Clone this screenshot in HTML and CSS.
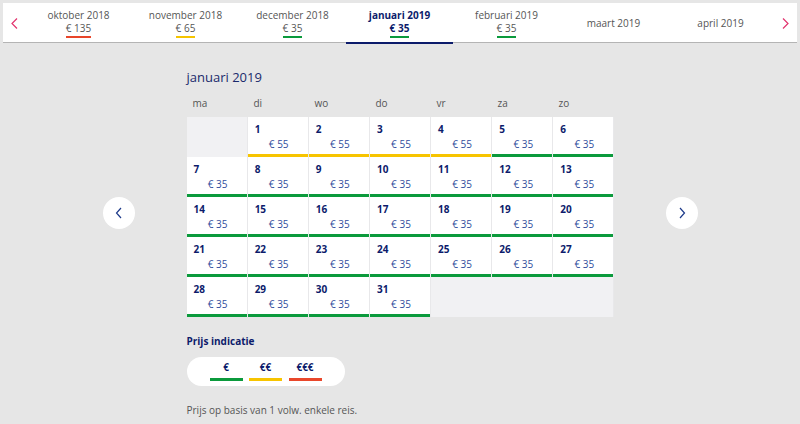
FILE: index.html
```html
<!DOCTYPE html>
<html lang="nl">
<head>
<meta charset="utf-8">
<title>Kalender</title>
<link rel="stylesheet" href="styles.css">
</head>
<body>
<div class="topbar">
  <button class="tab-arrow"><svg width="7" height="11" viewBox="0 0 7 11"><path d="M6 0.5 L1 5.5 L6 10.5" fill="none" stroke="#e2346e" stroke-width="1.2"/></svg></button>
  <div class="tabs">
    <div class="tab"><span class="m">oktober 2018</span><span class="p red">€ 135</span></div>
    <div class="tab"><span class="m">november 2018</span><span class="p yellow">€ 65</span></div>
    <div class="tab"><span class="m">december 2018</span><span class="p green">€ 35</span></div>
    <div class="tab active"><span class="m">januari 2019</span><span class="p green">€ 35</span></div>
    <div class="tab"><span class="m">februari 2019</span><span class="p green">€ 35</span></div>
    <div class="tab single"><span class="m">maart 2019</span></div>
    <div class="tab single"><span class="m">april 2019</span></div>
  </div>
  <button class="tab-arrow"><svg width="7" height="11" viewBox="0 0 7 11"><path d="M1 0.5 L6 5.5 L1 10.5" fill="none" stroke="#e2346e" stroke-width="1.2"/></svg></button>
</div>

<div class="main">
  <button class="nav"><svg width="8" height="12" viewBox="0 0 8 12"><path d="M6 1 L1.5 6 L6 11" fill="none" stroke="#1d3a8a" stroke-width="1.2"/></svg></button>
  <div class="cal">
    <h2 class="title">januari 2019</h2>
    <div class="dow"><span>ma</span><span>di</span><span>wo</span><span>do</span><span>vr</span><span>za</span><span>zo</span></div>
    <div class="grid">
      <div class="cell empty"></div>
      <div class="cell yellow"><b>1</b><span>€ 55</span></div>
      <div class="cell yellow"><b>2</b><span>€ 55</span></div>
      <div class="cell yellow"><b>3</b><span>€ 55</span></div>
      <div class="cell yellow"><b>4</b><span>€ 55</span></div>
      <div class="cell green"><b>5</b><span>€ 35</span></div>
      <div class="cell green"><b>6</b><span>€ 35</span></div>
      <div class="cell green"><b>7</b><span>€ 35</span></div>
      <div class="cell green"><b>8</b><span>€ 35</span></div>
      <div class="cell green"><b>9</b><span>€ 35</span></div>
      <div class="cell green"><b>10</b><span>€ 35</span></div>
      <div class="cell green"><b>11</b><span>€ 35</span></div>
      <div class="cell green"><b>12</b><span>€ 35</span></div>
      <div class="cell green"><b>13</b><span>€ 35</span></div>
      <div class="cell green"><b>14</b><span>€ 35</span></div>
      <div class="cell green"><b>15</b><span>€ 35</span></div>
      <div class="cell green"><b>16</b><span>€ 35</span></div>
      <div class="cell green"><b>17</b><span>€ 35</span></div>
      <div class="cell green"><b>18</b><span>€ 35</span></div>
      <div class="cell green"><b>19</b><span>€ 35</span></div>
      <div class="cell green"><b>20</b><span>€ 35</span></div>
      <div class="cell green"><b>21</b><span>€ 35</span></div>
      <div class="cell green"><b>22</b><span>€ 35</span></div>
      <div class="cell green"><b>23</b><span>€ 35</span></div>
      <div class="cell green"><b>24</b><span>€ 35</span></div>
      <div class="cell green"><b>25</b><span>€ 35</span></div>
      <div class="cell green"><b>26</b><span>€ 35</span></div>
      <div class="cell green"><b>27</b><span>€ 35</span></div>
      <div class="cell green"><b>28</b><span>€ 35</span></div>
      <div class="cell green"><b>29</b><span>€ 35</span></div>
      <div class="cell green"><b>30</b><span>€ 35</span></div>
      <div class="cell green"><b>31</b><span>€ 35</span></div>
      <div class="cell empty trail"></div>
    </div>
    <h3 class="legend-title">Prijs indicatie</h3>
    <div class="legend">
      <div class="lg green">€</div>
      <div class="lg yellow">€€</div>
      <div class="lg red">€€€</div>
    </div>
    <p class="note">Prijs op basis van 1 volw. enkele reis.</p>
  </div>
  <button class="nav"><svg width="8" height="12" viewBox="0 0 8 12"><path d="M2 1 L6.5 6 L2 11" fill="none" stroke="#1d3a8a" stroke-width="1.2"/></svg></button>
</div>
</body>
</html>
```

FILE: styles.css
```css
* { box-sizing: border-box; }
html, body { margin: 0; }
body {
  background: #e6e6e6;
  padding: 3px;
  font-family: "Open Sans", "Noto Sans", sans-serif;
  color: #555;
  height: 424px;
  overflow: hidden;
}
button { font: inherit; border: 0; padding: 0; background: none; cursor: pointer; }

.topbar {
  display: flex;
  height: 40px;
  background: #fff;
  border-bottom: 1px solid #b4b4b4;
}
.tab-arrow {
  width: 22px;
  display: flex;
  align-items: center;
  justify-content: center;
  padding-top: 1px;
}
.tab-arrow:last-child { width: 23px; }
.tabs { display: flex; }
.tab {
  width: 107px;
  display: flex;
  flex-direction: column;
  align-items: center;
  justify-content: flex-start;
  padding-top: 6px;
  font-size: 10px;
  line-height: 13px;
  color: #555;
  position: relative;
}
.tab.single { justify-content: center; padding-top: 2px; }
.tab .p {
  padding-bottom: 1px;
  border-bottom: 2px solid;
}
.tab .p.red { border-color: #e8452a; }
.tab .p.yellow { border-color: #f5c400; }
.tab .p.green { border-color: #0b9a3c; }
.tab.active { color: #0c1b6b; font-weight: 700; }
.tab.active::after {
  content: "";
  position: absolute;
  left: 0; right: 0; bottom: -2px;
  height: 2px;
  background: #0c1b6b;
}

.main {
  display: flex;
  justify-content: center;
  align-items: flex-start;
  gap: 52px;
}
.nav {
  width: 32px;
  height: 32px;
  border-radius: 50%;
  background: #fff;
  margin-top: 154px;
  display: flex;
  align-items: center;
  justify-content: center;
}
.cal { width: 427px; }
.title {
  margin: 25px 0 0;
  font-size: 13px;
  line-height: 18px;
  font-weight: 400;
  color: #1a2a6c;
}
.dow {
  display: grid;
  grid-template-columns: repeat(7, 1fr);
  margin-top: 10px;
  height: 21px;
  font-size: 10px;
  line-height: 14px;
  color: #555;
}
.dow span { padding-left: 6px; }
.grid {
  display: grid;
  grid-template-columns: repeat(7, 1fr);
  grid-auto-rows: 40px;
  column-gap: 1px;
  background: #e8e8ea;
}
.cell {
  background: #fff;
  display: flex;
  flex-direction: column;
  padding: 6px 7px 0;
  border-bottom: 3px solid transparent;
}
.cell b {
  font-size: 10px;
  line-height: 12px;
  color: #0c1b6b;
  font-weight: 700;
}
.cell span {
  margin-top: 3px;
  text-align: center;
  font-size: 10px;
  line-height: 13px;
  color: #2f4c9c;
  padding-left: 2px;
}
.cell.yellow { border-bottom-color: #f7c400; }
.cell.green { border-bottom-color: #0b9a3c; }
.cell.empty { background: #f1f1f3; border-bottom: 0; }
.cell.trail { grid-column: span 3; }

.legend-title {
  margin: 17px 0 0;
  font-size: 10px;
  line-height: 14px;
  font-weight: 700;
  color: #0c1b6b;
}
.legend {
  margin-top: 9px;
  width: 158px;
  height: 29px;
  background: #fff;
  border-radius: 15px;
  display: flex;
  gap: 6.5px;
  padding: 3px 0 0 23px;
}
.lg {
  width: 33px;
  height: 21px;
  text-align: center;
  font-size: 10px;
  line-height: 14px;
  font-weight: 700;
  color: #0c1b6b;
  border-bottom: 3px solid;
}
.lg.green { border-color: #0b9a3c; }
.lg.yellow { border-color: #f7c400; }
.lg.red { border-color: #e9472b; }
.note {
  margin: 17px 0 0;
  font-size: 10px;
  line-height: 14px;
  color: #555;
}
```
